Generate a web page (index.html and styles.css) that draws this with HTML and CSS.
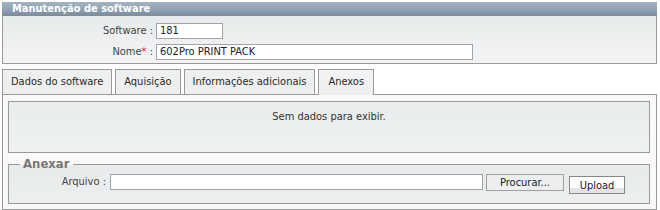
FILE: index.html
```
<!DOCTYPE html>
<html lang="pt-BR">
<head>
    <meta charset="UTF-8">
    <title>Manutenção de software</title>
    <link rel="stylesheet" href="styles.css">
</head>
<body>
    <div class="page">
        <div class="panel-title">Manutenção de software</div>
        <div class="form-box">
            <div class="form-row">
                <label>Software :</label>
                <input type="text" class="in-short" value="181">
            </div>
            <div class="form-row">
                <label>Nome<span class="req">*</span> :</label>
                <input type="text" class="in-long" value="602Pro PRINT PACK">
            </div>
        </div>

        <div class="tabs">
            <div class="tab">Dados do software</div>
            <div class="tab">Aquisição</div>
            <div class="tab">Informações adicionais</div>
            <div class="tab active">Anexos</div>
        </div>
        <div class="tab-panel">
            <div class="empty-box">Sem dados para exibir.</div>
            <fieldset class="attach">
                <legend>Anexar</legend>
                <div class="attach-row">
                    <label>Arquivo :</label>
                    <input type="text" class="in-file">
                    <button class="btn-browse">Procurar...</button>
                    <button class="btn-upload">Upload</button>
                </div>
            </fieldset>
        </div>
    </div>
</body>
</html>
```

FILE: styles.css
```
body {
    margin: 0;
    background-color: #fff;
    font-family: "DejaVu Sans Condensed", "DejaVu Sans", Verdana, sans-serif;
    font-size: 11px;
    color: #333;
}

.page {
    padding: 2px 3px 0 2px;
}

.panel-title {
    height: 13px;
    line-height: 13px;
    padding-left: 10px;
    font-weight: bold;
    color: #fff;
    background: linear-gradient(#a3b3c2, #8fa1b3 60%, #7a8ea2);
}

.form-box {
    border: 1px solid #999;
    border-top-color: #8a8a8a;
    background: linear-gradient(#e8ebec, #f2f3f4);
    padding: 4px 0 1px 0;
}

.form-row {
    display: flex;
    align-items: center;
    height: 21px;
}

.form-row label {
    width: 150px;
    text-align: right;
    color: #444;
    padding-right: 3px;
}

.req {
    color: #e02020;
}

input {
    font-family: inherit;
    font-size: 11px;
    color: #222;
    border: 1px solid #a0a4a8;
    background-color: #fff;
    height: 16px;
    box-sizing: border-box;
    padding: 0 3px;
}

.in-short {
    width: 67px;
}

.in-long {
    width: 317px;
}

.tabs {
    display: flex;
    gap: 3px;
    margin-top: 5px;
    position: relative;
    z-index: 1;
}

.tab {
    height: 24px;
    line-height: 24px;
    padding: 0 8px;
    border: 1px solid #9a9a9a;
    border-bottom: none;
    background-color: #eeefef;
    color: #2a2a2a;
    margin-bottom: 1px;
}

.tab.active {
    background: linear-gradient(#f3f4f5, #eceeef);
    height: 25px;
    margin-bottom: 0;
    padding: 0 9px;
}

.tab-panel {
    margin-top: -1px;
    border: 1px solid #999;
    background-color: #f9f9f9;
    padding: 6px 6px 5px 5px;
}

.empty-box {
    border: 1px solid #999;
    background: linear-gradient(#e9eced, #eff1f2);
    height: 50px;
    text-align: center;
    line-height: 30px;
    color: #333;
}

.attach {
    margin: 4px 0 0 0;
    border: 1px solid #999;
    background: linear-gradient(#e8ebec 0, #e8ebec 14%, #eceeef 100%);
    padding: 3px 0 9px 0;
}

.attach legend {
    margin-left: 11px;
    padding: 0 3px;
    font-weight: bold;
    font-size: 13px;
    line-height: 14px;
    color: #777;
}

.attach-row {
    display: flex;
    align-items: flex-start;
    height: 20px;
}

.attach-row label {
    width: 97px;
    text-align: right;
    padding-right: 4px;
    color: #444;
    line-height: 16px;
}

.in-file {
    width: 373px;
    margin-right: 3px;
}

button {
    font-family: inherit;
    font-size: 11px;
    color: #222;
    border: 1px solid #a0a0a0;
    box-sizing: border-box;
    padding: 0;
    cursor: pointer;
}

.btn-browse {
    width: 78px;
    height: 17px;
    background-color: #eceeef;
    margin-right: 5px;
}

.btn-upload {
    width: 56px;
    height: 18px;
    margin-top: 2px;
    border-color: #888;
    background: linear-gradient(#fff 0, #fff 70%, #e3e3e3 70%);
}
```
